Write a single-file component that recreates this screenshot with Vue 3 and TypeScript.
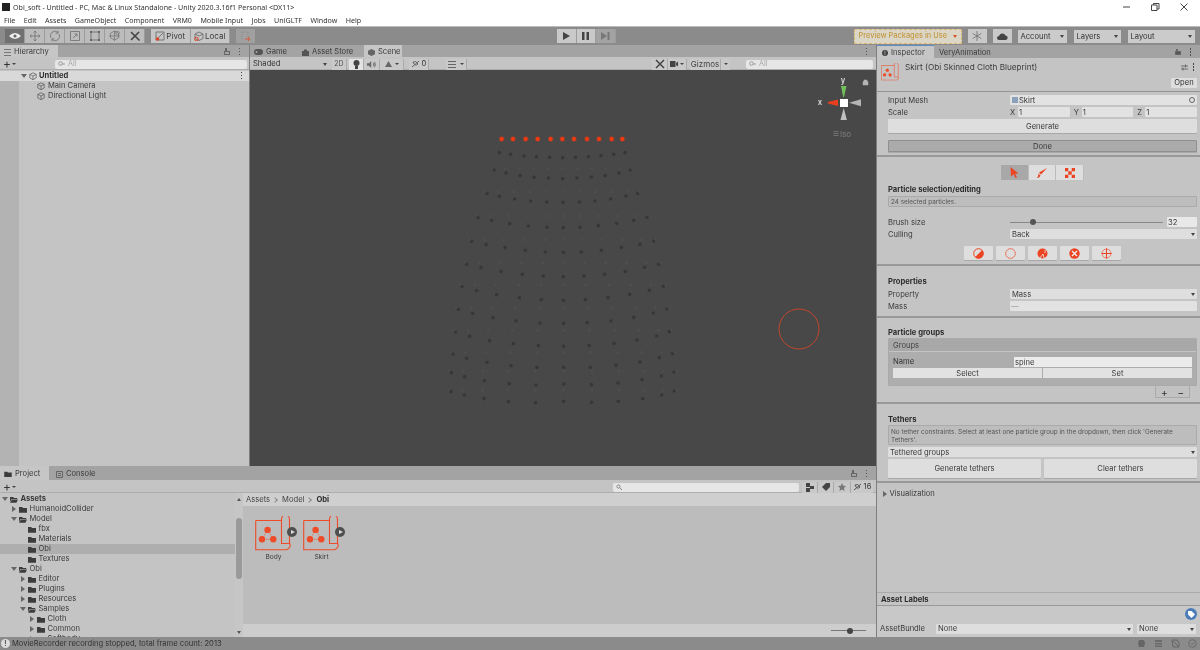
<script setup lang="ts">
const menus = ['File', 'Edit', 'Assets', 'GameObject', 'Component', 'VRM0', 'Mobile Input', 'Jobs', 'UniGLTF', 'Window', 'Help']

interface TreeRow { name: string; level: number; arrow: '' | 'open' | 'closed'; bold?: boolean; sel?: boolean }
const tree: TreeRow[] = [
  { name: 'Assets', level: 0, arrow: 'open', bold: true },
  { name: 'HumanoidCollider', level: 1, arrow: 'closed' },
  { name: 'Model', level: 1, arrow: 'open' },
  { name: 'fbx', level: 2, arrow: '' },
  { name: 'Materials', level: 2, arrow: '' },
  { name: 'Obi', level: 2, arrow: '', sel: true },
  { name: 'Textures', level: 2, arrow: '' },
  { name: 'Obi', level: 1, arrow: 'open' },
  { name: 'Editor', level: 2, arrow: 'closed' },
  { name: 'Plugins', level: 2, arrow: 'closed' },
  { name: 'Resources', level: 2, arrow: 'closed' },
  { name: 'Samples', level: 2, arrow: 'open' },
  { name: 'Cloth', level: 3, arrow: 'closed' },
  { name: 'Common', level: 3, arrow: 'closed' },
  { name: 'Softbody', level: 3, arrow: 'closed' },
]

const rowsA: [number[], number[]][] = [
  [[208,242,282,319,359,398,436,476,513,551,585],[98,103,108,110,112,113,112,110,107,103,98]],
  [[192,228,270,312,355,398,441,484,525,567,601],[150,159,167,172,174,176,174,171,167,159,150]],
  [[171,208,254,302,350,399,448,495,542,588,623],[220,229,237,243,246,247,246,243,237,228,220]],
  [[144,185,239,295,351,400,450,505,560,611,651],[293,301,311,318,322,323,322,317,310,301,292]],
  [[125,168,225,286,346,400,454,514,574,630,671],[364,374,383,391,396,397,396,391,382,373,363]],
  [[110,153,213,277,340,400,462,524,586,644,686],[433,442,454,463,468,470,468,463,454,442,433]],
  [[96,140,200,268,334,400,466,534,599,658,700],[500,512,524,533,539,541,539,533,523,511,499]],
  [[85,128,189,258,330,401,472,543,611,670,711],[568,580,593,603,609,610,608,603,592,579,567]],
  [[77,119,179,250,325,401,477,552,621,680,718],[636,649,662,671,677,679,676,670,660,648,635]],
  [[69,110,171,243,321,401,481,558,630,688,727],[702,715,727,737,742,742,742,736,726,713,701]],
  [[64,104,164,238,318,401,484,564,636,694,732],[758,770,782,791,795,792,794,789,779,768,756]],
  [[63,103,162,236,317,401,485,565,638,695,733],[815,825,836,845,848,844,847,844,836,825,813]],
]
const redX = [215,249,287,323,362,397,432,471,507,545,577]
const redDots = redX.map((x) => ({ x: 430 + x / 3, y: 139 }))
const darkDots = rowsA.flatMap(([xs, ys]) => xs.map((x, i) => ({ x: 430 + x / 3, y: 120 + ys[i] / 3 })))
const faintDots = rowsA.slice(1).flatMap(([xs, ys]) =>
  xs.map((x) => ({ x: 430 + (400 + (x - 400) * 1.02) / 3, y: 120 + (ys[0] - 5) / 3 })))
</script>

<template>
  <div class="app">
    <svg class="defs" width="0" height="0">
      <symbol id="folder" viewBox="0 0 10 8"><path d="M0 1h4l1 1h5v6H0z" fill="#3c3c3c" /></symbol>
      <symbol id="folderOpen" viewBox="0 0 10 8"><path d="M0 1h4l1 1h4v1.500H2L0 7zM2.500 4H10L8 8H0z" fill="#3c3c3c" /></symbol>
      <symbol id="cube" viewBox="0 0 10 10"><path d="M5 1l4 2v4.500L5 9.500 1 7.500V3zM1 3l4 2 4-2M5 5v4.500" fill="none" stroke="#4c4c4c" stroke-width=".8" /></symbol>
      <symbol id="blueprint" viewBox="0 0 36 35">
        <path d="M.7 4.500H26.500M26.500 4.500V3a4 4 0 0 1 8 0V27M26.500 4.500V27.500H34.500M.7 4.500V33.700H30a4.500 4.500 0 0 0 4.500-6.700" fill="none" stroke="#ee4c28" stroke-width="1.100" />
        <circle cx="12.600" cy="13.900" r="3.200" fill="#ee4c28" /><circle cx="7" cy="23.300" r="3.200" fill="#ee4c28" /><circle cx="18.300" cy="23.300" r="3.200" fill="#ee4c28" />
        <path d="M12.600 13.900L7 23.300h11.300z" fill="none" stroke="#ee4c28" stroke-width=".7" stroke-dasharray="1.500 1" />
      </symbol>
    </svg>

    <div class="titlebar">
      <span class="appicon"></span>
      <span class="title">Obi_soft - Untitled - PC, Mac &amp; Linux Standalone - Unity 2020.3.16f1 Personal &lt;DX11&gt;</span>
      <span class="winbtns">
        <svg width="10" height="10" viewBox="0 0 10 10"><path d="M2 5h7" stroke="#444" /></svg>
        <svg width="10" height="10" viewBox="0 0 10 10"><path d="M1.500 3h5.500v5.500h-5.500zM3.500 3V1.500H9V7H7" fill="none" stroke="#444" /></svg>
        <svg width="10" height="10" viewBox="0 0 10 10"><path d="M1.500 1.500l7 7M8.500 1.500l-7 7" stroke="#444" /></svg>
      </span>
    </div>
    <div class="menubar"><span v-for="m in menus" :key="m">{{ m }}</span></div>

    <div class="toolbar">
      <div class="bgroup tools">
        <span class="tbtn active"><svg width="12" height="8" viewBox="0 0 12 8"><path d="M0 4q6-6 12 0-6 6-12 0z" fill="#eee" /><circle cx="6" cy="4" r="1.600" fill="#666" /></svg></span>
        <span class="tbtn"><svg width="12" height="12" viewBox="0 0 12 12"><path d="M6 1v10M1 6h10M6 1L4.500 2.500M6 1l1.500 1.500M6 11L4.500 9.500M6 11l1.500-1.500M1 6l1.500-1.500M1 6l1.500 1.500M11 6L9.500 4.500M11 6L9.500 7.500" fill="none" stroke="#777" stroke-width=".9" /></svg></span>
        <span class="tbtn"><svg width="12" height="12" viewBox="0 0 12 12"><path d="M9 2.500A4.500 4.500 0 0 0 2 8M3 9.500A4.500 4.500 0 0 0 10 4M9 .8v2.400H6.600M3 11.200V8.800h2.400" fill="none" stroke="#777" stroke-width=".9" /></svg></span>
        <span class="tbtn"><svg width="12" height="12" viewBox="0 0 12 12"><path d="M1.500 1.500h9v9h-9zM4 8l4-4M5.500 4H8v2.500" fill="none" stroke="#777" stroke-width=".9" /></svg></span>
        <span class="tbtn"><svg width="12" height="12" viewBox="0 0 12 12"><path d="M2 2h8v8H2z" fill="none" stroke="#666" stroke-width=".8" /><path d="M1 1h2v2H1zM9 1h2v2H9zM1 9h2v2H1zM9 9h2v2H9z" fill="#666" /></svg></span>
        <span class="tbtn"><svg width="13" height="12" viewBox="0 0 13 12"><path d="M6.500 1l4 2.200v4.600L6.500 10l-4-2.200V3.200zM1 6h11M6.500 1v10" fill="none" stroke="#777" stroke-width=".8" /><circle cx="9.500" cy="3" r="1.800" fill="none" stroke="#777" stroke-width=".8" /></svg></span>
        <span class="tbtn"><svg width="12" height="12" viewBox="0 0 12 12"><path d="M2 2l8.500 8.500M10 2L2 10" stroke="#444" stroke-width="1.600" /></svg></span>
      </div>
      <div class="bgroup pivot">
        <span class="tbtn tx"><svg width="10" height="10" viewBox="0 0 10 10"><path d="M1 1h8v8H1zM8 2L3 7" fill="none" stroke="#777" /><circle cx="2.500" cy="8" r="1.800" fill="#e0452a" /></svg>Pivot</span>
        <span class="tbtn tx"><svg width="10" height="10" viewBox="0 0 10 10"><path d="M5 1l4 2v4.500L5 9.500 1 7.500V3zM1 3l4 2 4-2" fill="none" stroke="#777" /><circle cx="2.500" cy="8" r="1.800" fill="none" stroke="#e0452a" /></svg>Local</span>
      </div>
      <span class="tbtn collab"><svg width="11" height="11" viewBox="0 0 11 11"><path d="M2 1h6v6M2 1v8" fill="none" stroke="#888" stroke-dasharray="1 1" /><path d="M5 8h5M8 6l2 2-2 2" fill="none" stroke="#d9573c" /></svg></span>
      <div class="bgroup play">
        <span class="tbtn"><svg width="7" height="8" viewBox="0 0 7 8"><path d="M0 0l7 4-7 4z" fill="#444" /></svg></span>
        <span class="tbtn"><svg width="7" height="8" viewBox="0 0 7 8"><path d="M0 0h2.500v8H0zM4.500 0H7v8H4.500z" fill="#444" /></svg></span>
        <span class="tbtn dim"><svg width="9" height="8" viewBox="0 0 9 8"><path d="M0 0l6 4-6 4zM6.500 0H8.500v8H6.500z" fill="#777" /></svg></span>
      </div>
      <span class="preview">Preview Packages in Use<i class="caret orange"></i></span>
      <span class="tbtn snow"><svg width="10" height="10" viewBox="0 0 10 10"><path d="M5 0v10M.7 2.500l8.600 5M9.300 2.500l-8.600 5" stroke="#777" stroke-width=".9" /></svg></span>
      <span class="tbtn cloud"><svg width="11" height="7" viewBox="0 0 11 7"><path d="M2 7a2 2 0 0 1 0-4 3.500 3.500 0 0 1 6.500-.5A2.300 2.300 0 0 1 9 7z" fill="#444" /></svg></span>
      <span class="drop acc">Account<i class="caret"></i></span>
      <span class="drop lay">Layers<i class="caret"></i></span>
      <span class="drop lout">Layout<i class="caret"></i></span>
    </div>

    <div class="main">
      <div class="leftcol">
        <div class="toprow">
          <section class="hier">
            <div class="tabbar">
              <span class="tab on hiertab"><b class="lines"></b>Hierarchy</span>
              <span class="tabtools"><i class="lock"></i><i class="kebab"></i></span>
            </div>
            <div class="subbar">
              <span class="plus">+<i class="caret sm"></i></span>
              <span class="search h"><svg width="7" height="6" viewBox="0 0 7 6"><circle cx="2.500" cy="2.500" r="1.800" fill="none" stroke="#999" /><path d="M4 3l3 0" stroke="#999" /></svg>All</span>
            </div>
            <div class="hiercontent">
              <div class="gutter"></div>
              <div class="hlist">
                <div class="hscene"><i class="arr open"></i><svg width="8" height="8"><use href="#cube" /></svg><b>Untitled</b><i class="kebab dark"></i></div>
                <div class="hitem"><svg width="8" height="8"><use href="#cube" /></svg>Main Camera</div>
                <div class="hitem"><svg width="8" height="8"><use href="#cube" /></svg>Directional Light</div>
              </div>
            </div>
          </section>

          <section class="scene">
            <div class="tabbar">
              <span class="tab sgame"><svg width="9" height="6" viewBox="0 0 9 6"><rect width="9" height="6" rx="3" fill="#555" /><circle cx="2.500" cy="3" r="1" fill="#aaa" /></svg>Game</span>
              <span class="tab sstore"><svg width="7" height="7" viewBox="0 0 7 7"><path d="M0 2h7v5H0zM2 2V.5h3V2" fill="#555" /></svg>Asset Store</span>
              <span class="tab on sscene"><svg width="7" height="7" viewBox="0 0 7 7"><path d="M3.500 0l3.500 1.700v3.600L3.500 7 0 5.300V1.700z" fill="#666" /></svg>Scene</span>
              <span class="tabtools"><i class="kebab"></i></span>
            </div>
            <div class="subbar sbar">
              <span class="shaded">Shaded<i class="caret"></i></span>
              <span class="mini m2d">2D</span>
              <span class="mini lit"><svg width="7" height="9" viewBox="0 0 7 9"><circle cx="3.500" cy="3" r="3" fill="#444" /><path d="M2 6h3v3H2z" fill="#444" /></svg></span>
              <span class="mini w15"><svg width="9" height="7" viewBox="0 0 9 7"><path d="M0 2.500h2L4 .5v6L2 4.500H0zM6 1.500q1.500 2 0 4M7.500 .5q2 3 0 6" fill="#666" stroke="#666" stroke-width=".4" /></svg></span>
              <span class="mini fx"><svg width="9" height="8" viewBox="0 0 9 8"><path d="M1 7L4.500 1 8 7zM1 4h7" fill="#666" /></svg><i class="caret sm"></i></span>
              <span class="mini eye">
                <svg width="9" height="8" viewBox="0 0 9 8"><path d="M1 7L8 1M2 2q3-2 5 2-3 3-5-2" fill="none" stroke="#666" /></svg><em>0</em>
              </span>
              <span class="mini list"><svg width="8" height="7" viewBox="0 0 8 7"><path d="M0 0h8v1H0zM0 3h8v1H0zM0 6h8v1H0z" fill="#666" /></svg></span>
              <span class="mini w10"><i class="caret sm"></i></span>
              <span class="grow"></span>
              <span class="mini w16"><svg width="10" height="10" viewBox="0 0 10 10"><path d="M1 1l8 8M9 1L1 9" stroke="#444" stroke-width="1.500" /></svg></span>
              <span class="mini w18"><svg width="8" height="6" viewBox="0 0 8 6"><path d="M0 0h5.500v6H0zM6 2l2-1.500v5L6 4z" fill="#444" /></svg><i class="caret sm"></i></span>
              <span class="mini gizmos">Gizmos</span>
              <span class="mini w10 last"><i class="caret sm"></i></span>
              <span class="search s"><svg width="7" height="6" viewBox="0 0 7 6"><circle cx="2.500" cy="2.500" r="1.800" fill="none" stroke="#999" /><path d="M4 3l3 0" stroke="#999" /></svg>All</span>
            </div>
            <svg class="canvas" viewBox="250 70 626 397" width="626" height="397">
              <circle v-for="(d, i) in faintDots" :key="'f' + i" :cx="d.x" :cy="d.y" r="1.500" fill="#4e4e4e" />
              <circle v-for="(d, i) in darkDots" :key="'d' + i" :cx="d.x" :cy="d.y" r="1.800" fill="#2a2a2a" opacity=".55" />
              <g v-for="(d, i) in redDots" :key="'r' + i">
                <circle :cx="d.x" :cy="d.y" r="2.700" fill="#8c4030" />
                <circle :cx="d.x" :cy="d.y" r="1.900" fill="#f8390f" />
              </g>
              <circle cx="799" cy="329" r="20" fill="none" stroke="#c4452e" stroke-width="1" />
              <path d="M841 86h5.500l-2.500 11h-.8z" fill="#72c05c" />
              <path d="M838 99.500v6.500l-10-2.500v-1.500z" fill="#e8401f" />
              <path d="M849 102.700l12-3.500v7z" fill="#b5b5b5" />
              <path d="M843.700 108l3.200 12h-6.400z" fill="#c0c0c0" />
              <rect x="840" y="99" width="8" height="8" fill="#fff" />
              <text x="843" y="82.500" class="gz">y</text>
              <text x="820" y="105" class="gz">x</text>
              <path d="M863 81.500h5v3.500h-5zM864 81.500v-1.500h3v1.500" fill="#b5b5b5" stroke="#b5b5b5" stroke-width=".5" />
              <path d="M833.500 131.500h5M833.500 133.500h5M833.500 135.500h5" stroke="#7c7c7c" stroke-width=".8" />
              <text x="840" y="136.500" class="iso">Iso</text>
            </svg>
          </section>
        </div>

        <section class="project">
          <div class="tabbar ptabs">
            <span class="tab on ptab"><svg width="8" height="6"><use href="#folder" /></svg>Project</span>
            <span class="tab ctab"><svg width="7" height="7" viewBox="0 0 7 7"><path d="M.5.5h6v6h-6zM2 2.500h3M2 4.500h3" fill="none" stroke="#555" stroke-width=".8" /></svg>Console</span>
            <span class="tabtools"><i class="lock"></i><i class="kebab"></i></span>
          </div>
          <div class="subbar pbar">
            <span class="plus">+<i class="caret sm"></i></span>
            <span class="grow"></span>
            <span class="search p"><svg width="6" height="6" viewBox="0 0 6 6"><circle cx="2.500" cy="2.500" r="1.600" fill="none" stroke="#888" /><path d="M3.800 3.800L6 6" stroke="#888" /></svg></span>
            <span class="mini w16"><svg width="9" height="9" viewBox="0 0 9 9"><path d="M1 0h4v4H1zM5 3h4v3H5zM1 5h4v4H1z" fill="#444" /></svg></span>
            <span class="mini w16"><svg width="8" height="8" viewBox="0 0 8 8"><path d="M4 0h4v4L4 8 0 4z" fill="#444" /></svg></span>
            <span class="mini w17"><svg width="8" height="8" viewBox="0 0 8 8"><path d="M4 0l1.200 2.700L8 3 6 5l.5 3L4 6.500 1.500 8 2 5 0 3l2.800-.3z" fill="#777" /></svg></span>
            <span class="mini w22 last"><svg width="9" height="8" viewBox="0 0 9 8"><path d="M1 7L8 1M2 2q3-2 5 2-3 3-5-2" fill="none" stroke="#555" /></svg><em>16</em></span>
          </div>
          <div class="pbody">
            <div class="ptree">
              <div v-for="(r, i) in tree" :key="i" class="trow" :class="{ sel: r.sel, bold: r.bold }" :style="{ paddingLeft: 2 + r.level * 9 + 'px' }">
                <span class="arrbox"><i class="arr" :class="r.arrow"></i></span>
                <svg width="8" height="7"><use :href="r.arrow === 'open' ? '#folderOpen' : '#folder'" /></svg>
                <span>{{ r.name }}</span>
              </div>
            </div>
            <div class="scrollbar"><i class="up"></i><b></b><i class="down"></i></div>
            <div class="pgrid">
              <div class="crumbs">Assets<i class="chev"></i>Model<i class="chev"></i><b>Obi</b></div>
              <div class="assets">
                <div class="asset" v-for="n in ['Body', 'Skirt']" :key="n">
                  <div class="aicon"><svg width="36" height="35"><use href="#blueprint" /></svg><span class="playb"><i></i></span></div>
                  <span>{{ n }}</span>
                </div>
              </div>
              <div class="pfoot"><span class="slider"><i></i></span></div>
            </div>
          </div>
        </section>
      </div>

      <aside class="insp">
        <div class="tabbar itabs">
          <span class="tab on itab"><i class="info">!</i>Inspector</span>
          <span class="tab vtab">VeryAnimation</span>
          <span class="tabtools"><i class="lock solid"></i><i class="kebab"></i></span>
        </div>
        <div class="ihead">
          <svg class="hicon" width="18" height="18" viewBox="0 0 36 35"><use href="#blueprint" /></svg>
          <span class="iname">Skirt (Obi Skinned Cloth Blueprint)</span>
          <span class="hright">
            <span class="sliders"><svg width="7" height="7" viewBox="0 0 7 7"><path d="M0 2h7M0 5h7M4.500 .5v3M2 3.500v3" stroke="#555" stroke-width=".8" /></svg><i class="kebab dark"></i></span>
            <span class="openbtn">Open</span>
          </span>
        </div>
        <div class="sec a">
          <div class="row"><label>Input Mesh</label><div class="field mesh"><i class="sq"></i>Skirt<i class="tgt"></i></div></div>
          <div class="row"><label>Scale</label>
            <div class="xyz">
              <span class="ax">X</span><span class="field num">1</span>
              <span class="ax">Y</span><span class="field num">1</span>
              <span class="ax">Z</span><span class="field num">1</span>
            </div>
          </div>
          <div class="btn gen">Generate</div>
          <div class="btn done">Done</div>
        </div>
        <div class="sec b">
          <div class="seg">
            <span class="on"><svg width="9" height="11" viewBox="0 0 9 11"><path d="M.5 0L8.500 6.500 5 6.800 7 10.500 5.500 11 3.500 7.300 1 9.500z" fill="#ec4422" /></svg></span>
            <span><svg width="10" height="10" viewBox="0 0 10 10"><path d="M10 0L4 6.500 2 4.500zM1.500 5.500L3.500 7.500Q2.500 10 0 10q1.500-2 1.500-4.500z" fill="#ec4422" /></svg></span>
            <span><svg width="10" height="10" viewBox="0 0 10 10"><path d="M0 0h3.300v3.300H0zM6.700 0H10v3.300H6.700zM3.300 3.300h3.400v3.400H3.300zM0 6.700h3.300V10H0zM6.700 6.700H10V10H6.700z" fill="#ec4422" /></svg></span>
          </div>
          <h4>Particle selection/editing</h4>
          <div class="help one">24 selected particles.</div>
          <div class="row brush"><label>Brush size</label><div class="sl"><span class="track"><i></i></span><span class="field n32">32</span></div></div>
          <div class="row"><label>Culling</label><div class="dd">Back<i class="caret"></i></div></div>
          <div class="ops">
            <span><svg width="11" height="11" viewBox="0 0 11 11"><circle cx="5.500" cy="5.500" r="4.800" fill="none" stroke="#ec4422" /><path d="M9 2.200A4.800 4.800 0 0 1 2.200 9z" fill="#ec4422" /></svg></span>
            <span><svg width="11" height="11" viewBox="0 0 11 11"><circle cx="5.500" cy="5.500" r="4.800" fill="none" stroke="#ec4422" stroke-dasharray="1.500 .6" /></svg></span>
            <span><svg width="11" height="11" viewBox="0 0 11 11"><circle cx="5.500" cy="5.500" r="5" fill="#ec4422" /><path d="M3 10l3-4 1 4M8 2v3" stroke="#eee" fill="none" stroke-width=".8" /></svg></span>
            <span><svg width="11" height="11" viewBox="0 0 11 11"><circle cx="5.500" cy="5.500" r="5.200" fill="#ec4422" /><path d="M3 3l5 5M8 3l-5 5" stroke="#eee" stroke-width="1.400" /></svg></span>
            <span><svg width="11" height="11" viewBox="0 0 11 11"><circle cx="5.500" cy="5.500" r="4.500" fill="none" stroke="#e8795e" /><path d="M5.500 .5v10M.5 5.500h10" stroke="#ec4422" /></svg></span>
          </div>
        </div>
        <div class="sec c">
          <h4>Properties</h4>
          <div class="row"><label>Property</label><div class="dd">Mass<i class="caret"></i></div></div>
          <div class="row"><label>Mass</label><div class="field wide">—</div></div>
        </div>
        <div class="sec d">
          <h4>Particle groups</h4>
          <div class="groups">
            <div class="ghead">Groups</div>
            <div class="gbody">
              <div class="gname"><label>Name</label><span class="gin">spine</span></div>
              <div class="gbtns"><span>Select</span><span>Set</span></div>
            </div>
          </div>
          <div class="pm"><span>+</span><span>−</span></div>
        </div>
        <div class="sec e">
          <h4>Tethers</h4>
          <div class="help two">No tether constraints. Select at least one particle group in the dropdown, then click 'Generate Tethers'.</div>
          <div class="dd full">Tethered groups<i class="caret"></i></div>
          <div class="tbtns"><span class="btn">Generate tethers</span><span class="btn">Clear tethers</span></div>
        </div>
        <div class="sec f"><i class="arr closed"></i>Visualization</div>
        <div class="alabels"><b>Asset Labels</b></div>
        <div class="abundle">
          <div class="tagrow"><span class="tag"><svg width="7" height="7" viewBox="0 0 7 7"><path d="M0 0h3.500L7 3.500 3.500 7 0 3.500z" fill="#fff" /></svg></span></div>
          <div class="bunrow"><label>AssetBundle</label><div class="dd b1">None<i class="caret"></i></div><div class="dd b2">None<i class="caret"></i></div></div>
        </div>
      </aside>
    </div>

    <div class="status">
      <span class="warn">!</span>
      <span class="msg">MovieRecorder recording stopped, total frame count: 2013</span>
      <span class="grow"></span>
      <span class="sicons">
        <svg width="9" height="9" viewBox="0 0 9 9"><path d="M2 1h5l1 3-1 4H2L1 4z" fill="#666" /></svg>
        <svg width="9" height="9" viewBox="0 0 9 9"><path d="M1 1h7v7H1z" fill="#6a6a6a" /><path d="M1 3.500h7M1 6h7" stroke="#999" stroke-width=".7" /></svg>
        <svg width="9" height="9" viewBox="0 0 9 9"><path d="M1 1h5l2 3v4H2zM2 2l5 5" fill="none" stroke="#666" /></svg>
        <svg width="9" height="9" viewBox="0 0 9 9"><circle cx="4.500" cy="4.500" r="3.800" fill="none" stroke="#666" stroke-width=".8" /><path d="M2.800 4.500l1.300 1.300 2.200-2.500" fill="none" stroke="#666" stroke-width=".8" /></svg>
      </span>
    </div>
  </div>
</template>

<style>
html, body { margin: 0; padding: 0; background: #8a8a8a; }
</style>

<style scoped>
.app { width: 1200px; height: 650px; overflow: hidden; display: flex; flex-direction: column; font: 7.6px/10px Inter, "Liberation Sans", sans-serif; color: #303030; background: #8a8a8a; filter: blur(.35px); }
.defs { position: absolute; }
i { font-style: normal; display: inline-block; }
em { font-style: normal; }
label { display: block; }
.grow { flex: 1; }

.titlebar { height: 14px; background: #fff; display: flex; align-items: center; font: 7.1px "Noto Sans", sans-serif; color: #333; flex: none; }
.appicon { width: 8px; height: 8px; margin-left: 2px; background: #222; }
.title { margin-left: 3px; }
.winbtns { margin-left: auto; display: flex; gap: 19px; margin-right: 11px; }
.menubar { height: 13px; background: #fff; display: flex; gap: 8.500px; padding-left: 4px; align-items: center; font: 7.100px "Noto Sans", sans-serif; color: #333; flex: none; border-bottom: 1px solid #bbb; box-sizing: border-box; }

.toolbar { height: 18px; flex: none; background: #8b8b8b; display: flex; align-items: center; }
.bgroup { display: flex; gap: 0; }
.tbtn { height: 14px; background: #c9c9c9; display: flex; align-items: center; justify-content: center; box-sizing: border-box; border-right: 1px solid #9c9c9c; }
.tools { margin-left: 5px; }
.tools .tbtn { width: 20px; background: #bcbcbc; }
.tbtn.active { background: #707070; }
.pivot { margin-left: 6px; }
.pivot .tbtn { width: 39.500px; gap: 1px; color: #3a3a3a; background: #c6c6c6; font-size: 8px; }
.collab { width: 19px; margin-left: 6px; background: #a0a0a0; border: 0; }
.play { margin-left: 302px; }
.play .tbtn { width: 19.500px; }
.play .dim { background: #a3a3a3; }
.preview { margin-left: 238px; width: 108px; height: 15px; box-sizing: border-box; border: 1px dashed #d8b877; background: #dcd6c6; color: #c29a45; display: flex; align-items: center; justify-content: space-between; padding: 0 4px; font-size: 7.400px; font-weight: 500; white-space: nowrap; }
.snow { width: 19px; margin-left: 6px; border: 0; }
.cloud { width: 19px; margin-left: 6px; border: 0; }
.drop { height: 13px; background: #cbcbcb; display: flex; align-items: center; justify-content: space-between; padding: 1px 3px 0; box-sizing: border-box; color: #333; }
.acc { width: 49px; margin-left: 6px; }
.lay { width: 47px; margin-left: 7px; }
.lout { width: 67px; margin-left: 7px; }
.caret { width: 0; height: 0; border-left: 2.500px solid transparent; border-right: 2.500px solid transparent; border-top: 3px solid #444; }
.caret.sm { border-left-width: 2px; border-right-width: 2px; border-top-width: 2.500px; }
.caret.orange { border-top-color: #d4542e; }

.main { flex: 1; display: flex; min-height: 0; }
.leftcol { width: 876px; flex: none; display: flex; flex-direction: column; background: #7d7d7d; }
.toprow { height: 421px; flex: none; display: flex; gap: 1px; }

.tabbar { height: 12px; background: #a3a3a3; display: flex; align-items: stretch; flex: none; color: #3a3a3a; }
.tab { display: flex; align-items: center; gap: 3px; box-sizing: border-box; padding-top: 2px; }
.tab.on { background: #c6c6c6; }
.tabtools { margin-left: auto; display: flex; align-items: center; gap: 9px; padding-right: 9px; padding-top: 1px; }
.kebab { width: 1.500px; height: 1.500px; background: #555; box-shadow: 0 -3px 0 #555, 0 3px 0 #555; }
.lock { width: 6px; height: 4px; border: 1px solid #666; box-sizing: border-box; margin-top: 2px; position: relative; }
.lock::before { content: ""; position: absolute; left: 0; top: -3.500px; width: 2.500px; height: 3px; border: 1px solid #666; border-bottom: 0; border-radius: 2px 2px 0 0; box-sizing: border-box; }
.lock.solid { background: #555; }
.lines { width: 7px; height: 5px; border-top: 1px solid #777; border-bottom: 1px solid #777; background: linear-gradient(#777, #777) center/100% 1px no-repeat; }
.hiertab { width: 58px; padding-left: 4px; }
.subbar { height: 13px; background: #c4c4c4; display: flex; align-items: center; flex: none; box-sizing: border-box; border-bottom: 1px solid #adadad; padding-top: 2px; }
.plus { display: flex; align-items: center; gap: 1px; font-size: 12px; margin-left: 3px; color: #333; width: 46px; }
.search { background: #e6e6e6; border-radius: 2px; height: 9px; display: flex; align-items: center; gap: 3px; padding-left: 3px; color: #a8a8a8; box-sizing: border-box; font-size: 7.200px; }
.search.h { width: 192px; margin-left: 6px; }
.search.s { width: 127px; margin-left: 16px; margin-right: 3px; }
.search.p { width: 186px; margin-right: 3px; }

.hier { width: 249px; flex: none; display: flex; flex-direction: column; background: #c4c4c4; }
.hiercontent { flex: 1; display: flex; }
.gutter { width: 19px; background: #b3b3b3; margin-top: 10px; flex: none; }
.hlist { flex: 1; margin-left: -19px; }
.hscene { height: 10px; background: #d9d9d9; display: flex; align-items: center; gap: 2px; padding-left: 21px; margin-top: .5px; }
.hscene .kebab { margin-left: auto; margin-right: 7px; }
.kebab.dark { background: #444; box-shadow: 0 -3px 0 #444, 0 3px 0 #444; }
.hitem { height: 10px; display: flex; align-items: center; gap: 3px; padding-left: 37px; color: #3a3a3a; }
.arr { width: 0; height: 0; flex: none; }
.arr.open { border-left: 3px solid transparent; border-right: 3px solid transparent; border-top: 4.500px solid #666; }
.arr.closed { border-top: 3px solid transparent; border-bottom: 3px solid transparent; border-left: 4.500px solid #666; margin-left: 1px; margin-right: .5px; }

.scene { flex: 1; display: flex; flex-direction: column; background: #484848; min-width: 0; }
.sgame { margin-left: 4px; width: 48px; }
.sstore { width: 64px; }
.sscene { width: 38px; padding-left: 4px; margin-left: -2px; }
.sbar { background: #c4c4c4; }
.shaded { width: 80px; padding: 0 3px; box-sizing: border-box; display: flex; justify-content: space-between; align-items: center; color: #333; }
.mini { height: 11px; min-width: 8px; display: flex; align-items: center; justify-content: center; gap: 2px; padding: 0; box-sizing: border-box; background: #c9c9c9; border-right: 1px solid #aaa; color: #333; }
.mini em { font-size: 7.600px; }
.m2d { width: 15px; margin-left: 2px; font-size: 7px; color: #555; }
.lit { width: 15px; background: #e3e3e3; margin-left: 2px; }
.w15 { width: 16px; }
.fx { width: 24px; }
.eye { width: 20px; margin-left: 5px; }
.list { width: 12px; margin-left: 17px; border-right: 0; }
.w10 { width: 9px; }
.w16 { width: 16px; }
.w17 { width: 17px; }
.w18 { width: 19px; }
.w22 { width: 22px; }
.pbar { padding-right: 3px; height: 13px; }
.gizmos { width: 31px; margin-left: 3px; color: #444; font-size: 8px; }
.last { border-right: 0; }
.canvas { display: block; flex: none; }
.gz { font: bold 7.500px Inter, sans-serif; fill: #d0d0d0; text-anchor: middle; }
.iso { font: 8px Inter, sans-serif; fill: #7e7e7e; }

.project { flex: 1; display: flex; flex-direction: column; background: #c4c4c4; min-height: 0; }
.ptabs { height: 14px; }
.ptab { width: 49px; padding-left: 4px; }
.ctab { padding-left: 7px; }
.pbody { flex: 1; display: flex; min-height: 0; }
.ptree { width: 235px; flex: none; overflow: hidden; padding-top: 1px; box-sizing: border-box; }
.trow { height: 10px; display: flex; align-items: center; gap: 2.500px; color: #3a3a3a; }
.arrbox { width: 8px; margin-right: -2.500px; flex: none; display: flex; align-items: center; }
.trow svg { flex: none; }
.trow.sel { background: #aeaeae; }
.trow.bold { font-weight: 700; }
.scrollbar { width: 8px; flex: none; background: #c6c6c6; display: flex; flex-direction: column; align-items: center; }
.scrollbar b { width: 6px; height: 61px; background: #9a9a9a; border-radius: 3px; margin-top: 17px; }
.scrollbar .up { width: 0; border-left: 2.500px solid transparent; border-right: 2.500px solid transparent; border-bottom: 3px solid #555; margin-top: 5px; }
.scrollbar .down { width: 0; border-left: 2.500px solid transparent; border-right: 2.500px solid transparent; border-top: 3px solid #555; margin-top: auto; margin-bottom: 3px; }
.pgrid { flex: 1; display: flex; flex-direction: column; background: #bcbcbc; min-width: 0; }
.crumbs { height: 13px; background: #cfcfcf; display: flex; align-items: center; padding-left: 3px; flex: none; color: #444; }
.crumbs b { color: #2c2c2c; }
.chev { width: 3px; height: 3px; border-top: 1px solid #888; border-right: 1px solid #888; transform: rotate(45deg); margin: 0 5px 0 3px; }
.assets { flex: 1; display: flex; gap: 11px; padding: 10px 0 0 12px; }
.asset { width: 37px; display: flex; flex-direction: column; align-items: center; font-size: 6.600px; color: #3c3c3c; }
.aicon { position: relative; width: 37px; height: 35px; margin-bottom: 1px; }
.playb { position: absolute; left: 32px; top: 11px; width: 10px; height: 10px; border-radius: 50%; background: #4f4f4f; display: flex; align-items: center; justify-content: center; }
.playb i { width: 0; height: 0; border-top: 2.500px solid transparent; border-bottom: 2.500px solid transparent; border-left: 4px solid #ddd; margin-left: 1px; }
.pfoot { height: 13px; flex: none; background: #cdcdcd; display: flex; align-items: center; justify-content: flex-end; padding-right: 10px; }
.slider { width: 35px; height: 1px; background: #777; position: relative; display: block; }
.slider i { position: absolute; left: 16px; top: -2.500px; width: 6px; height: 6px; border-radius: 50%; background: #444; }

.insp { flex: 1; display: flex; flex-direction: column; background: #c4c4c4; min-width: 0; border-left: 1px solid #7f7f7f; box-sizing: border-box; }
.itabs { height: 13px; }
.itab { width: 57px; padding-left: 5px; border-top: 1px solid #5c8dc4; }
.info { width: 6px; height: 6px; border-radius: 50%; background: #444; color: #ddd; font-size: 5px; line-height: 6px; text-align: center; }
.vtab { padding-left: 5px; }
.ihead { height: 34px; flex: none; box-sizing: border-box; border-bottom: 1px solid #939393; display: flex; padding: 4px 3px 0 4px; }
.hicon { flex: none; margin-top: 1px; }
.iname { margin-left: 6px; color: #3c3c3c; font-size: 8.200px; }
.hright { margin-left: auto; display: flex; flex-direction: column; align-items: flex-end; gap: 7px; }
.sliders { display: flex; align-items: center; gap: 5px; margin-right: 3px; height: 8px; margin-top: 1px; }
.openbtn { width: 26px; height: 10px; background: #dedede; text-align: center; display: block; border-radius: 1px; }

.sec { box-sizing: border-box; padding: 0 3px 0 11px; flex: none; border-bottom: 2px solid #999; display: flex; flex-direction: column; }
.row { height: 10px; display: flex; align-items: center; flex: none; color: #3a3a3a; }
.row > label { width: 122px; flex: none; padding-top: 1px; }
.ax { padding-top: 1px; }
.field { background: #e2e2e2; height: 10px; display: flex; align-items: center; box-sizing: border-box; padding: 1px 0 0 1px; border-radius: 1px; color: #3a3a3a; }
.sec.a { height: 65px; padding-top: 3px; gap: 2px; }
.mesh { flex: 1; gap: 1px; padding-left: 2px; }
.sq { width: 6px; height: 6px; background: #8aa0bb; margin-top: -1px; }
.tgt { width: 6px; height: 6px; border: 1px solid #666; border-radius: 50%; margin: -1px 2px 0 auto; box-sizing: border-box; }
.xyz { flex: 1; display: flex; align-items: center; }
.ax { width: 8px; flex: none; box-sizing: border-box; }
.num { flex: 1; margin-right: 4px; }
.num:last-child { margin-right: 0; }
.btn { background: #dedede; display: flex; align-items: center; justify-content: center; border-radius: 1px; box-shadow: 0 1px 0 #a8a8a8; color: #3a3a3a; box-sizing: border-box; padding-top: 1px; }
.gen { height: 14px; flex: none; }
.done { height: 12px; margin-top: 5px; background: #ababab; border: 1px solid #8f8f8f; flex: none; }
.sec.b { height: 109px; padding-top: 8px; }
.seg { display: flex; align-self: center; height: 15px; }
.seg span { width: 27.500px; background: #dedede; display: flex; align-items: center; justify-content: center; border-right: 1px solid #bbb; box-sizing: border-box; }
.seg .on { background: #a8a8a8; }
h4 { margin: 0 0 -1px; font-size: 7.600px; line-height: 11px; font-weight: 700; color: #2c2c2c; flex: none; }
.sec.b h4 { margin-top: 4px; }
.help { background: #bdbdbd; border: 1px solid #aaa; box-sizing: border-box; font-size: 6.400px; line-height: 8px; color: #555; padding: 1px 2px; border-radius: 1px; flex: none; margin-top: 2px; }
.help.one { height: 11px; }
.help.two { height: 20px; padding-top: 2px; }
.brush { margin-top: 10px; margin-bottom: 2px; }
.sl { flex: 1; display: flex; align-items: center; gap: 4px; }
.track { flex: 1; height: 1px; background: #888; position: relative; display: block; }
.track i { position: absolute; left: 20px; top: -2.500px; width: 6px; height: 6px; border-radius: 50%; background: #555; }
.n32 { width: 30px; background: #e8e8e8; }
.dd { flex: 1; height: 10px; background: #dedede; display: flex; align-items: center; justify-content: space-between; padding: 1px 2px 0; box-sizing: border-box; border-radius: 1px; color: #3a3a3a; }
.dd.full { flex: none; margin-top: 2px; }
.ops { display: flex; gap: 3px; justify-content: center; margin-top: 7px; }
.ops span { width: 29px; height: 14px; background: #dedede; display: flex; align-items: center; justify-content: center; box-shadow: 0 1px 0 #a8a8a8; border-radius: 1px; }
.sec.c { height: 52px; padding-top: 9px; gap: 2px; }
.sec.c h4 { margin-bottom: 0; margin-top: 1px; }
.wide { flex: 1; color: #999; }
.sec.d { height: 86px; padding-top: 9px; }
.groups { margin-top: 1px; border: 1px solid #aaa; border-radius: 1px; height: 48px; box-sizing: border-box; display: flex; flex-direction: column; }
.ghead { height: 12px; background: #a8a8a8; padding: 1px 0 0 4px; line-height: 12px; color: #444; box-sizing: border-box; }
.gbody { flex: 1; background: #adadad; margin-top: 1px; padding: 4px 4px 0; }
.gname { display: flex; align-items: center; height: 11px; }
.gname label { width: 121px; color: #333; padding-top: 1px; }
.gin { flex: 1; background: #ebebeb; height: 10px; line-height: 11px; padding-left: 1px; color: #3a3a3a; }
.gbtns { display: flex; gap: 1px; margin-top: 1px; }
.gbtns span { flex: 1; background: #e2e2e2; height: 10px; line-height: 11px; text-align: center; color: #3a3a3a; }
.pm { align-self: flex-end; margin-right: 7px; width: 35px; height: 12px; display: flex; justify-content: space-around; align-items: center; border: 1px solid #aaa; border-top: 0; box-sizing: border-box; font-size: 10px; background: #c2c2c2; }
.sec.e { height: 79px; padding-top: 10px; }
.sec.e .help { margin-top: 1px; }
.tbtns { display: flex; gap: 3px; margin-top: 2px; }
.tbtns .btn { flex: 1; height: 19px; }
.sec.f { flex: 1; min-height: 0; border: 0; flex-direction: row; align-items: flex-start; gap: 2px; padding: 6px 0 0 5px; color: #3a3a3a; }
.sec.f .arr { margin-top: 2px; }
.alabels { height: 14px; flex: none; background: #c4c4c4; border-top: 1px solid #aaa; border-bottom: 1px solid #999; box-sizing: border-box; padding-left: 4px; line-height: 13px; }
.alabels b { color: #2c2c2c; }
.abundle { height: 31px; flex: none; display: flex; flex-direction: column; padding: 2px 3px 0 3px; box-sizing: border-box; background: #c8c8c8; }
.tagrow { height: 12px; display: flex; justify-content: flex-end; }
.tag { width: 12px; height: 12px; border-radius: 50%; background: #4c7cb8; display: flex; align-items: center; justify-content: center; }
.bunrow { display: flex; align-items: center; margin-top: 3px; color: #3a3a3a; }
.bunrow label { width: 56px; flex: none; padding-top: 1px; }
.b1 { flex: none; width: 197px; }
.b2 { flex: none; width: 59px; margin-left: 4px; }

.status { height: 13px; flex: none; background: #8b8b8b; display: flex; align-items: center; color: #333; }
.warn { width: 9px; height: 9px; border-radius: 50%; background: #ddd; color: #555; font-size: 7px; line-height: 9px; text-align: center; margin-left: 1px; font-weight: 700; }
.msg { margin-left: 2px; padding-top: 1px; }
.sicons { display: flex; gap: 8px; margin-right: 3px; }
</style>
